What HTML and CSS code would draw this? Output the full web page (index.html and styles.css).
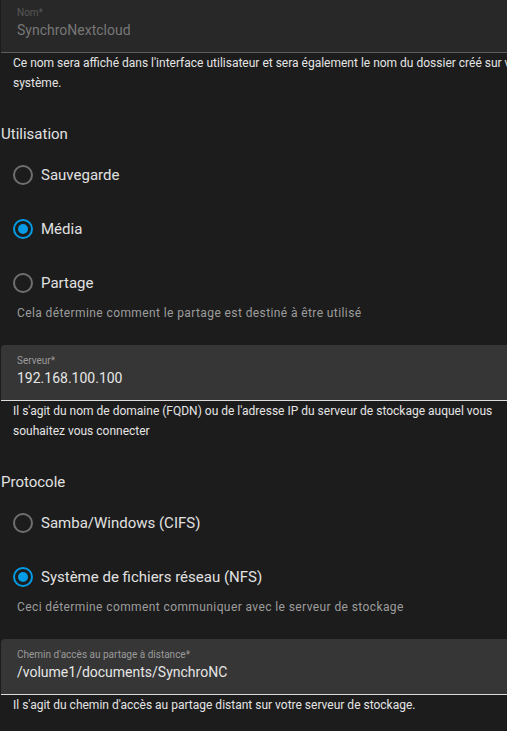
FILE: index.html
```html
<!DOCTYPE html>
<html lang="fr">
<head>
  <meta charset="UTF-8" />
  <meta name="viewport" content="width=device-width, initial-scale=1.0" />
  <title>Ajouter un stockage réseau</title>
  <link rel="stylesheet" href="styles.css">
</head>
<body>
  <div class="form">
    <div class="field field-disabled field-first">
      <div class="field-label">Nom*</div>
      <div class="field-value">SynchroNextcloud</div>
    </div>
    <div class="helper">Ce nom sera affiché dans l'interface utilisateur et sera également le nom du dossier créé sur votre système.</div>

    <div class="group-title">Utilisation</div>
    <div class="radio-row"><span class="radio"></span>Sauvegarde</div>
    <div class="radio-row"><span class="radio checked"></span>Média</div>
    <div class="radio-row"><span class="radio"></span>Partage</div>
    <div class="hint">Cela détermine comment le partage est destiné à être utilisé</div>

    <div class="field">
      <div class="field-label">Serveur*</div>
      <div class="field-value">192.168.100.100</div>
    </div>
    <div class="helper">Il s'agit du nom de domaine (FQDN) ou de l'adresse IP du serveur de stockage auquel vous souhaitez vous connecter</div>

    <div class="group-title">Protocole</div>
    <div class="radio-row"><span class="radio"></span>Samba/Windows (CIFS)</div>
    <div class="radio-row"><span class="radio checked"></span>Système de fichiers réseau (NFS)</div>
    <div class="hint">Ceci détermine comment communiquer avec le serveur de stockage</div>

    <div class="field">
      <div class="field-label">Chemin d'accès au partage à distance*</div>
      <div class="field-value">/volume1/documents/SynchroNC</div>
    </div>
    <div class="helper">Il s'agit du chemin d'accès au partage distant sur votre serveur de stockage.</div>
  </div>
</body>
</html>
```

FILE: styles.css
```css
* { box-sizing: border-box; margin: 0; padding: 0; }
html, body {
  background: #1c1c1c;
  overflow: hidden;
}
body {
  font-family: Roboto, "Liberation Sans", sans-serif;
  color: #e1e1e1;
}
.form {
  width: 551px;
  padding-left: 1px;
  display: flex;
  flex-direction: column;
}
.field {
  height: 56px;
  background: #363636;
  border-radius: 4px 4px 0 0;
  border-bottom: 1px solid #dcdcdc;
  padding: 10px 16px 0;
  margin-top: 24px;
}
.field-first {
  margin-top: -3px;
}
.field-disabled {
  background: #282828;
  border-bottom-color: #5e5e5e;
}
.field-label {
  font-size: 10px;
  line-height: 12px;
  color: #9a9a9a;
}
.field-value {
  font-size: 14px;
  line-height: 20px;
  margin-top: 1px;
  color: #e6e6e6;
}
.field-disabled .field-label { color: #585858; }
.field-disabled .field-value { color: #777; }
.helper {
  font-size: 12px;
  line-height: 20px;
  padding: 0 16px 0 12px;
  color: #e4e4e4;
}
.group-title {
  font-size: 15px;
  line-height: 20px;
  margin-top: 31px;
  margin-bottom: 11px;
}
.radio-row {
  height: 40px;
  display: flex;
  align-items: center;
  gap: 8px;
  padding-left: 12px;
  font-size: 15px;
  margin-bottom: 14px;
}
.radio {
  width: 20px;
  height: 20px;
  border: 2px solid #6f6f6f;
  border-radius: 50%;
  flex-shrink: 0;
  position: relative;
}
.radio.checked {
  border-color: #039be5;
}
.radio.checked::after {
  content: "";
  position: absolute;
  left: 3px;
  top: 3px;
  width: 10px;
  height: 10px;
  border-radius: 50%;
  background: #039be5;
}
.hint {
  font-size: 12px;
  line-height: 16px;
  letter-spacing: 0.4px;
  color: #9c9c9c;
  padding-left: 16px;
  margin-top: -12px;
}
```
